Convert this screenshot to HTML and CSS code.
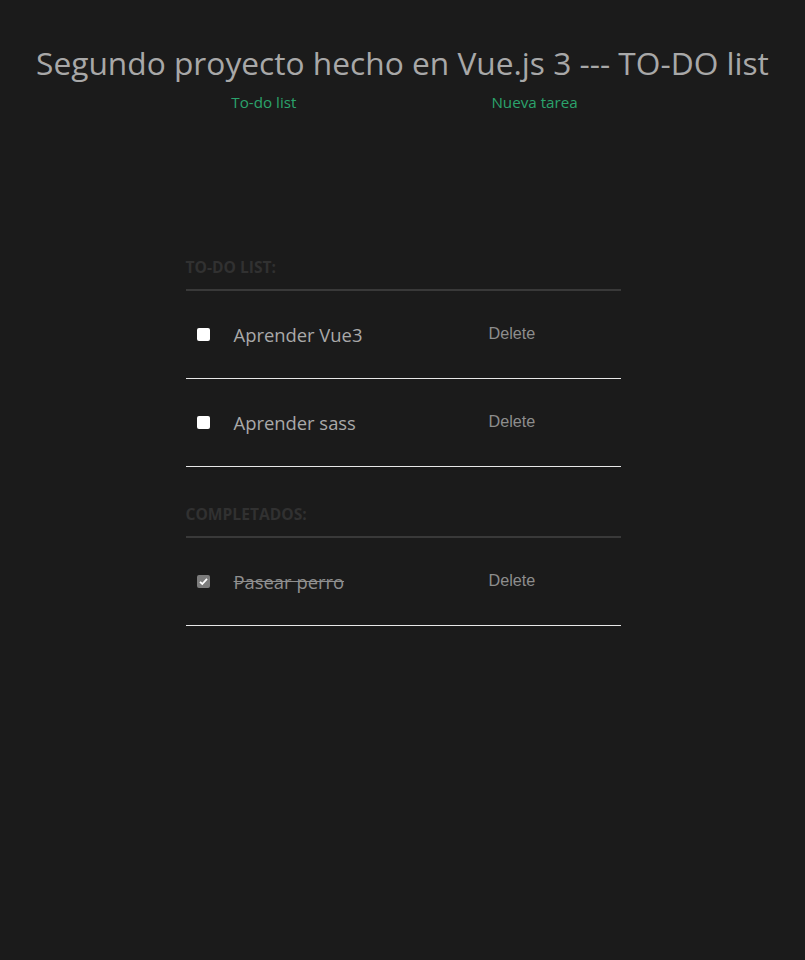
FILE: index.html
```html
<!DOCTYPE html>
<html lang="es">
<head>
<meta charset="utf-8">
<title>TO-DO list</title>
<link rel="stylesheet" href="styles.css">
</head>
<body>
<header class="top">
  <h1 class="title">Segundo proyecto hecho en Vue.js 3 --- TO-DO list</h1>
  <nav class="nav">
    <a class="nav-link" href="#">To-do list</a>
    <a class="nav-link" href="#">Nueva tarea</a>
  </nav>
</header>
<main class="lists">
  <section class="group">
    <h2 class="group-title">TO-DO LIST:</h2>
    <ul class="items">
      <li class="item">
        <span class="check"></span>
        <span class="label">Aprender Vue3</span>
        <button class="delete">Delete</button>
      </li>
      <li class="item">
        <span class="check"></span>
        <span class="label">Aprender sass</span>
        <button class="delete">Delete</button>
      </li>
    </ul>
  </section>
  <section class="group">
    <h2 class="group-title">COMPLETADOS:</h2>
    <ul class="items">
      <li class="item">
        <span class="check checked"><svg viewBox="0 0 13 13" width="13" height="13"><path d="M3 6.8 L5.3 9 L10 3.8" fill="none" stroke="#fff" stroke-width="1.8"/></svg></span>
        <span class="label done">Pasear perro</span>
        <button class="delete">Delete</button>
      </li>
    </ul>
  </section>
</main>
</body>
</html>
```
FILE: styles.css
```css
html, body {
  margin: 0;
  padding: 0;
  background: #1b1b1b;
  height: 100%;
}
body {
  font-family: "Open Sans", "Noto Sans", sans-serif;
  color: #a9a9a9;
}
.top {
  padding-top: 41px;
  text-align: center;
}
.title {
  margin: 0;
  font-size: 31.7px;
  font-weight: 400;
  line-height: 44px;
  color: #a8a8a8;
}
.nav {
  display: flex;
  justify-content: center;
  gap: 195px;
  margin-top: 7px;
  padding-left: 4px;
}
.nav-link {
  color: #2ba36c;
  text-decoration: none;
  font-size: 15.2px;
  line-height: 20px;
}
.lists {
  width: 435px;
  margin: 145px auto 0;
  padding-left: 1px;
}
.group-title {
  margin: 0;
  font-size: 15.6px;
  font-weight: 700;
  color: #313131;
  line-height: 20px;
  padding-bottom: 12px;
  border-bottom: 2px solid #393939;
}
.group + .group {
  margin-top: 37px;
}
.items {
  list-style: none;
  margin: 0;
  padding: 0;
}
.item {
  display: flex;
  align-items: center;
  height: 87px;
  border-bottom: 1px solid #e8e8e8;
}
.check {
  width: 13px;
  height: 13px;
  margin-left: 11px;
  background: #fff;
  border-radius: 2px;
  flex: none;
}
.check.checked {
  background: #7c7c7c;
}
.check svg {
  display: block;
}
.label {
  margin-left: 24px;
  width: 255px;
  font-size: 18.4px;
  color: #a9a9a9;
}
.label.done {
  text-decoration: line-through;
  color: #8f8f8f;
}
.delete {
  background: none;
  border: none;
  padding: 0;
  margin-top: -2px;
  font-family: "Liberation Sans", Arial, sans-serif;
  font-size: 16.2px;
  color: #8d8d8d;
}
```
